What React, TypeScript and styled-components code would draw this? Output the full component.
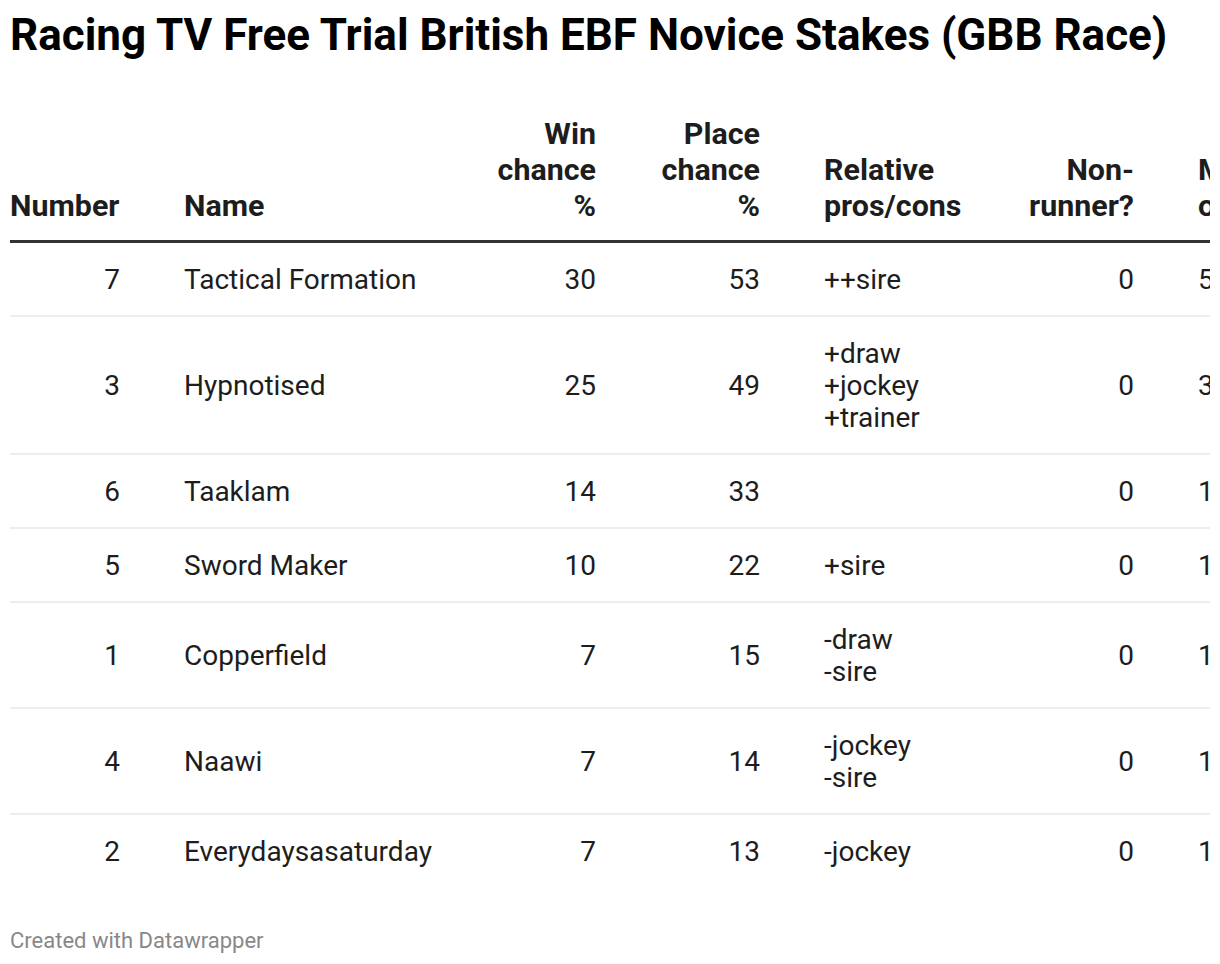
import React from "react";
import styled, { createGlobalStyle } from "styled-components";

const GlobalStyle = createGlobalStyle`
  html, body {
    margin: 0;
    padding: 0;
    background: #ffffff;
  }
  body {
    font-family: Roboto, "Liberation Sans", Arial, sans-serif;
    color: #1d1d1d;
  }
`;

type Align = "left" | "right";

type Column = {
  label: string[];
  width: number;
  head: Align;
};

const columns: Column[] = [
  { label: ["Number"], width: 110, head: "left" },
  { label: ["Name"], width: 248, head: "left" },
  { label: ["Win", "chance", "%"], width: 100, head: "right" },
  { label: ["Place", "chance", "%"], width: 100, head: "right" },
  { label: ["Relative", "pros/cons"], width: 140, head: "left" },
  { label: ["Non-", "runner?"], width: 106, head: "right" },
  { label: ["Market", "odds"], width: 100, head: "left" },
];

const rows = [
  { num: 7, name: "Tactical Formation", win: 30, place: 53, notes: ["++sire"], nr: 0, odds: "5/2" },
  { num: 3, name: "Hypnotised", win: 25, place: 49, notes: ["+draw", "+jockey", "+trainer"], nr: 0, odds: "3/1" },
  { num: 6, name: "Taaklam", win: 14, place: 33, notes: [], nr: 0, odds: "11/2" },
  { num: 5, name: "Sword Maker", win: 10, place: 22, notes: ["+sire"], nr: 0, odds: "10/1" },
  { num: 1, name: "Copperfield", win: 7, place: 15, notes: ["-draw", "-sire"], nr: 0, odds: "14/1" },
  { num: 4, name: "Naawi", win: 7, place: 14, notes: ["-jockey", "-sire"], nr: 0, odds: "16/1" },
  { num: 2, name: "Everydaysasaturday", win: 7, place: 13, notes: ["-jockey"], nr: 0, odds: "12/1" },
];

const App = () => {
  return (
    <Page>
      <GlobalStyle />
      <Title>Racing TV Free Trial British EBF Novice Stakes (GBB Race)</Title>
      <TableWrap>
        <Table>
          <colgroup>
            {columns.map((c, i) => (
              <col key={i} style={{ width: c.width + (i === 0 ? 32 : 64) }} />
            ))}
          </colgroup>
          <thead>
            <tr>
              {columns.map((c, i) => (
                <HeadCell key={i} $align={c.head}>
                  {c.label.map((l, j) => (
                    <Line key={j}>{l}</Line>
                  ))}
                </HeadCell>
              ))}
            </tr>
          </thead>
          <tbody>
            {rows.map((r, i) => (
              <Row key={i} $last={i === rows.length - 1}>
                <Cell $align="right">{r.num}</Cell>
                <Cell $align="left">{r.name}</Cell>
                <Cell $align="right">{r.win}</Cell>
                <Cell $align="right">{r.place}</Cell>
                <Cell $align="left">
                  {r.notes.map((n, j) => (
                    <Line key={j}>{n}</Line>
                  ))}
                </Cell>
                <Cell $align="right">{r.nr}</Cell>
                <Cell $align="left">{r.odds}</Cell>
              </Row>
            ))}
          </tbody>
        </Table>
      </TableWrap>
      <Footer>Created with Datawrapper</Footer>
    </Page>
  );
};

export default App;

const Page = styled.div`
  width: 1220px;
  height: 964px;
  box-sizing: border-box;
  padding: 10px 10px 0 10px;
  overflow: hidden;
`;

const Title = styled.h1`
  margin: 0;
  font-family: Roboto, "Liberation Sans", Arial, sans-serif;
  font-size: 44px;
  line-height: 50px;
  font-weight: 700;
  color: #000000;
  white-space: nowrap;
`;

const TableWrap = styled.div`
  width: 1200px;
  overflow: hidden;
  margin-top: 53px;
`;

const Table = styled.table`
  border-collapse: collapse;
  table-layout: fixed;
  width: 1260px;
`;

const HeadCell = styled.th<{ $align: Align }>`
  text-align: ${(p) => p.$align};
  vertical-align: bottom;
  font-size: 30.4px;
  font-weight: 700;
  line-height: 36px;
  color: #1d1d1d;
  padding: 3px 32px 16px 32px;
  border-bottom: 3px solid #333333;
  white-space: nowrap;

  &:first-child {
    padding-left: 0;
  }
`;

const Row = styled.tr<{ $last?: boolean }>`
  border-bottom: ${(p) => (p.$last ? "none" : "2px solid #eeeeee")};
`;

const Cell = styled.td<{ $align: Align }>`
  text-align: ${(p) => p.$align};
  vertical-align: middle;
  font-size: 28px;
  line-height: 32px;
  padding: 21px 32px 19px 32px;
  white-space: nowrap;

  &:first-child {
    padding-left: 0;
  }
`;

const Line = styled.div``;

const Footer = styled.div`
  margin-top: 42px;
  font-size: 22px;
  line-height: 24px;
  color: #888888;
`;
